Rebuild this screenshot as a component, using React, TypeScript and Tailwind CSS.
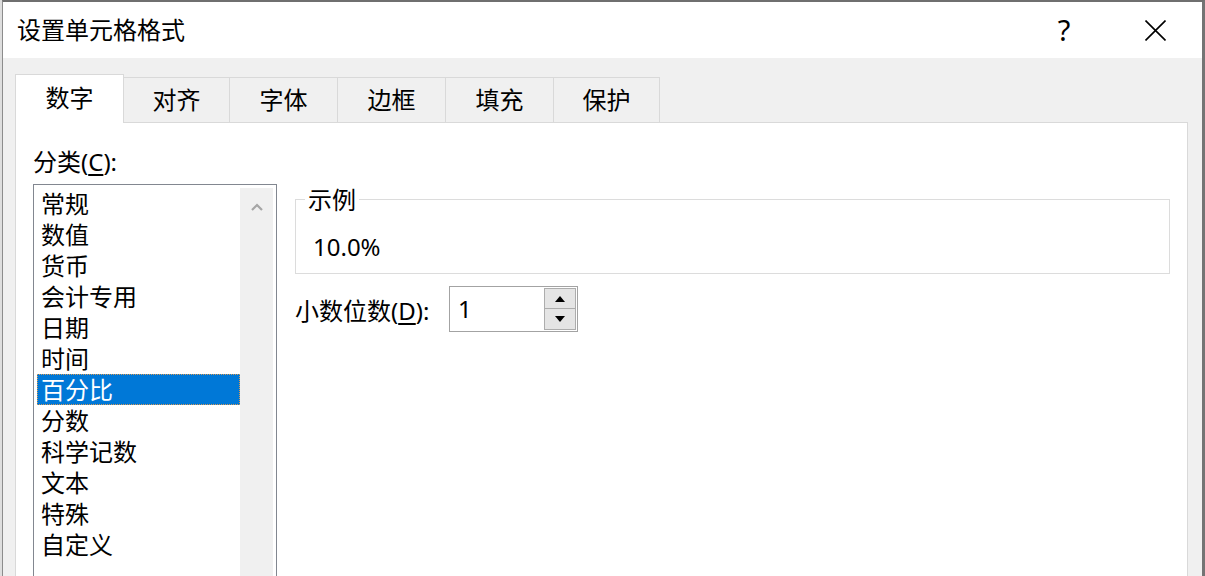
const TABS = [
  { label: '数字', w: 'w-[109px]', active: true },
  { label: '对齐', w: 'w-[106px]', active: false },
  { label: '字体', w: 'w-[108px]', active: false },
  { label: '边框', w: 'w-[108px]', active: false },
  { label: '填充', w: 'w-[108px]', active: false },
  { label: '保护', w: 'w-[106px]', active: false },
]

const CATEGORIES = [
  '常规', '数值', '货币', '会计专用', '日期', '时间',
  '百分比', '分数', '科学记数', '文本', '特殊', '自定义',
]

const SELECTED = '百分比'

function Tab({ label, w, active }: { label: string; w: string; active: boolean }) {
  if (active) {
    return (
      <div className={`${w} relative z-10 -mb-px flex h-[49px] items-center justify-center border border-b-0 border-[#d9d9d9] bg-white pb-[2px]`}>
        {label}
      </div>
    )
  }
  return (
    <div className={`${w} flex h-[45px] items-center justify-center border-t border-r border-[#d9d9d9] bg-[#f0f0f0]`}>
      {label}
    </div>
  )
}

function CategoryList() {
  return (
    <div className="flex h-[420px] w-[244px] border border-[#828790] bg-white p-[3px]">
      <div className="flex-1">
        {CATEGORIES.map((c) =>
          c === SELECTED ? (
            <div key={c} className="h-[31px] border border-dotted border-[#d89a55] bg-[#0078d7] pl-[3px] leading-[29px] text-white">
              {c}
            </div>
          ) : (
            <div key={c} className="h-[31px] pl-[4px] leading-[31px]">
              {c}
            </div>
          ),
        )}
      </div>
      {/* vertical scrollbar */}
      <div className="flex w-[33px] justify-center bg-[#f0f0f0] pt-[15px]">
        <svg width="12" height="8" viewBox="0 0 12 8">
          <path d="M1 7 L6 2 L11 7" fill="none" stroke="#a6a6a6" strokeWidth="2.2" />
        </svg>
      </div>
    </div>
  )
}

function Spinner() {
  return (
    <div className="flex h-[46px] w-[129px] border border-[#a3a3a3] bg-white">
      <div className="flex-1 pl-[8px] leading-[44px]">1</div>
      <div className="flex flex-col py-[1px] pr-[1px]">
        <div className="flex h-[21px] w-[32px] items-center justify-center border border-[#adadad] bg-[#e5e5e5]">
          <svg width="10" height="6" viewBox="0 0 10 6">
            <path d="M0 6 L5 0 L10 6 Z" fill="#000" />
          </svg>
        </div>
        <div className="flex h-[21px] w-[32px] items-center justify-center border border-t-0 border-[#adadad] bg-[#e5e5e5]">
          <svg width="10" height="6" viewBox="0 0 10 6">
            <path d="M0 0 L10 0 L5 6 Z" fill="#000" />
          </svg>
        </div>
      </div>
    </div>
  )
}

export default function App() {
  return (
    <div className="h-[576px] w-[1205px] overflow-hidden bg-[#dedede] font-['Noto_Sans','Noto_Sans_CJK_SC',sans-serif] text-[24px] text-black">
      <div className="ml-[2px] flex h-full flex-col border-t-2 border-r-[3px] border-l border-t-[#6f6f6f] border-r-[#747474] border-l-[#8c8c8c]">
        {/* Title bar */}
        <div className="flex h-[56px] shrink-0 items-center bg-white pl-[14px]">
          <span className="flex-1 leading-[30px]">设置单元格格式</span>
          <span className="w-[46px] text-center text-[29px] leading-[30px]">?</span>
          <div className="ml-[45px] mr-[24px] flex w-[46px] justify-center">
            <svg width="21" height="21" viewBox="0 0 21 21">
              <path d="M0.5 0.5 L20.5 20.5 M20.5 0.5 L0.5 20.5" stroke="#000" strokeWidth="1.6" />
            </svg>
          </div>
        </div>

        {/* Body */}
        <div className="flex flex-1 flex-col bg-[#f0f0f0] pl-[12px] pr-[14px] pt-[16px]">
          <div className="flex h-[48px] items-end">
            {TABS.map((t) => (
              <Tab key={t.label} {...t} />
            ))}
          </div>

          <div className="flex flex-1 border border-[#d9d9d9] bg-white pl-[17px] pr-[17px] pt-[24px]">
            {/* left column */}
            <div className="w-[244px] shrink-0">
              <div className="h-[30px] leading-[30px]">
                分类(<span className="underline underline-offset-[3px]">C</span>):
              </div>
              <div className="mt-[7px]">
                <CategoryList />
              </div>
            </div>

            {/* right column */}
            <div className="ml-[18px] flex-1 pt-[52px]">
              <div className="relative h-[75px] border border-[#dcdcdc] pl-[17px] pt-[32px]">
                <span className="absolute left-[9px] top-[-13px] bg-white px-[3px] leading-[26px]">示例</span>
                <div className="leading-[30px]">10.0%</div>
              </div>
              <div className="mt-[12px] flex items-center">
                <div className="w-[154px] shrink-0 pt-[4px] leading-[30px]">
                  小数位数(<span className="underline underline-offset-[3px]">D</span>):
                </div>
                <Spinner />
              </div>
            </div>
          </div>
        </div>
      </div>
    </div>
  )
}
